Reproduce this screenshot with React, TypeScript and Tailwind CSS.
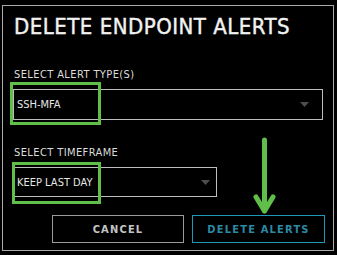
const font = "font-['DejaVu_Sans_Condensed','DejaVu_Sans',sans-serif]"

function Caret() {
  return (
    <svg width="9" height="5" viewBox="0 0 9 5" className="shrink-0">
      <path d="M0 0 H9 L4.5 5 Z" fill="#4d4d4d" />
    </svg>
  )
}

function Select({ value, width, padRight }: { value: string; width: string; padRight: string }) {
  return (
    <div className={`flex items-center justify-between border border-[#bdbdbd] pl-[3px] ${width} ${padRight}`}>
      <span className="text-[11px] leading-[11px] text-[#e6e6e6]">{value}</span>
      <Caret />
    </div>
  )
}

export default function App() {
  return (
    <div className={`relative w-[337px] h-[255px] bg-black pt-[5px] pl-[2px] ${font}`}>
      <div className="flex flex-col w-[332px] h-[246px] border border-[#a9a9a9] pt-[10px] pl-[10px] pr-[8px]">
        <h1 className="ml-[1px] text-[22px] leading-[22px] tracking-[0.5px] text-[#f2f2f2] [-webkit-text-stroke:0.4px_#f2f2f2]">
          DELETE ENDPOINT ALERTS
        </h1>

        <label className="mt-[31px] ml-[1px] text-[11px] leading-[11px] tracking-[0.4px] text-[#dcdcdc]">
          SELECT ALERT TYPE(S)
        </label>
        <div className="mt-[9px]">
          <Select value="SSH-MFA" width="w-[310px] h-[31px]" padRight="pr-[13px]" />
        </div>

        <label className="mt-[27px] ml-[1px] text-[11px] leading-[11px] tracking-[0.4px] text-[#dcdcdc]">
          SELECT TIMEFRAME
        </label>
        <div className="mt-[9px]">
          <Select value="KEEP LAST DAY" width="w-[204px] h-[30px]" padRight="pr-[6px]" />
        </div>

        <div className="mt-[18px] flex justify-end gap-[8px]">
          <button className="w-[132px] h-[28px] border border-[#9a9a9a] text-[11px] leading-[11px] font-bold tracking-[1.2px] text-[#c4c4c4]">
            CANCEL
          </button>
          <button className="w-[133px] h-[28px] border border-[#1f97b6] text-[11px] leading-[11px] font-bold tracking-[1.2px] text-[#2b8aa4]">
            DELETE ALERTS
          </button>
        </div>
      </div>

      <div className="absolute left-[10px] top-[82px] w-[91px] h-[43px] border-[3px] border-[#5fbf48]" />
      <div className="absolute left-[12px] top-[162px] w-[89px] h-[42px] border-[3px] border-[#5fbf48]" />

      <svg className="absolute left-0 top-0" width="337" height="255" viewBox="0 0 337 255">
        <path
          d="M264.5 140 V211 M256 197 L264.5 211 L273 197"
          fill="none"
          stroke="#5fbf48"
          strokeWidth="5"
          strokeLinecap="round"
          strokeLinejoin="round"
        />
      </svg>
    </div>
  )
}
